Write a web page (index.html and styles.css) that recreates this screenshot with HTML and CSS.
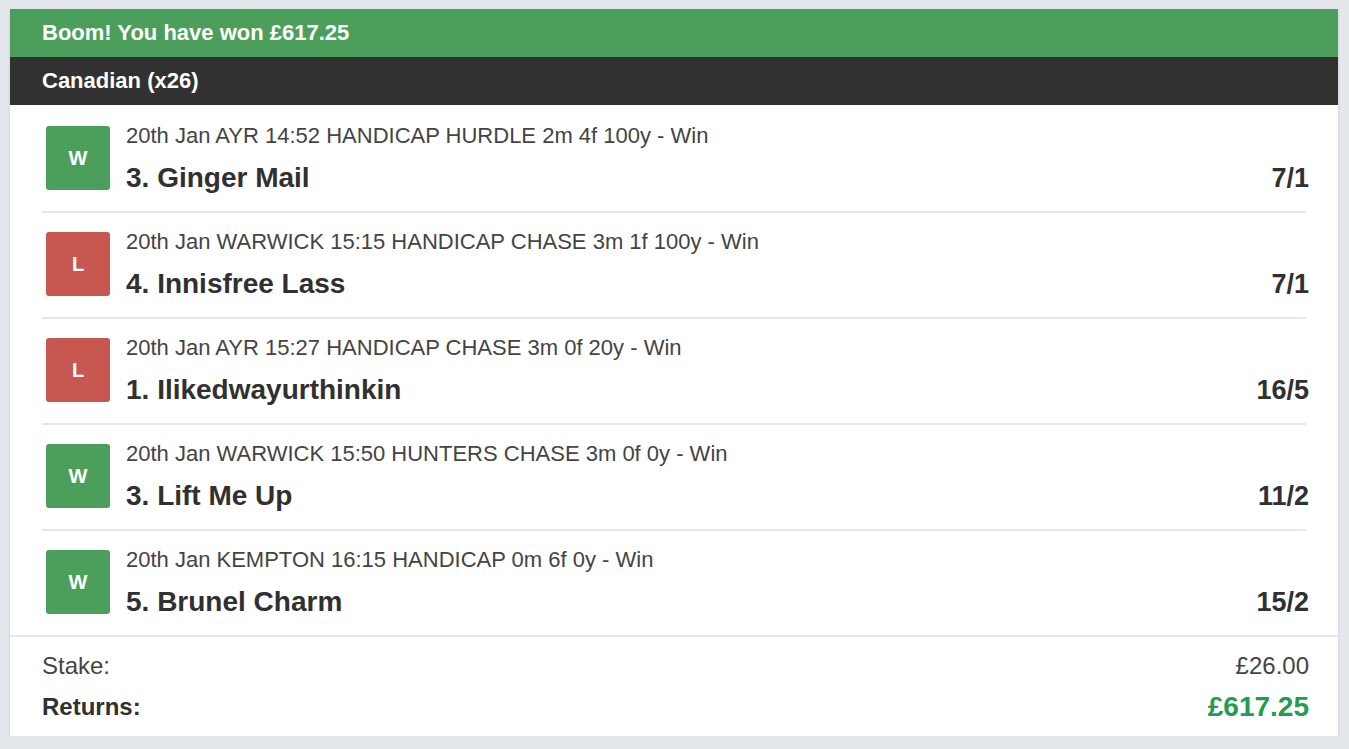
FILE: index.html
```html
<!DOCTYPE html>
<html>
<head>
<meta charset="utf-8">
<link rel="stylesheet" href="styles.css">
</head>
<body>
<div class="card">
  <div class="banner">Boom! You have won £617.25</div>
  <div class="bet-type">Canadian (x26)</div>
  <div class="legs">
    <div class="leg">
      <div class="badge badge-win">W</div>
      <div class="leg-info">
        <div class="race">20th Jan AYR 14:52 HANDICAP HURDLE 2m 4f 100y - Win</div>
        <div class="horse">3. Ginger Mail</div>
      </div>
      <div class="odds">7/1</div>
    </div>
    <div class="leg">
      <div class="badge badge-lose">L</div>
      <div class="leg-info">
        <div class="race">20th Jan WARWICK 15:15 HANDICAP CHASE 3m 1f 100y - Win</div>
        <div class="horse">4. Innisfree Lass</div>
      </div>
      <div class="odds">7/1</div>
    </div>
    <div class="leg">
      <div class="badge badge-lose">L</div>
      <div class="leg-info">
        <div class="race">20th Jan AYR 15:27 HANDICAP CHASE 3m 0f 20y - Win</div>
        <div class="horse">1. Ilikedwayurthinkin</div>
      </div>
      <div class="odds">16/5</div>
    </div>
    <div class="leg">
      <div class="badge badge-win">W</div>
      <div class="leg-info">
        <div class="race">20th Jan WARWICK 15:50 HUNTERS CHASE 3m 0f 0y - Win</div>
        <div class="horse">3. Lift Me Up</div>
      </div>
      <div class="odds">11/2</div>
    </div>
    <div class="leg">
      <div class="badge badge-win">W</div>
      <div class="leg-info">
        <div class="race">20th Jan KEMPTON 16:15 HANDICAP 0m 6f 0y - Win</div>
        <div class="horse">5. Brunel Charm</div>
      </div>
      <div class="odds">15/2</div>
    </div>
  </div>
  <div class="summary">
    <div class="summary-row">
      <span class="label">Stake:</span>
      <span class="value">£26.00</span>
    </div>
    <div class="summary-row summary-returns">
      <span class="label">Returns:</span>
      <span class="value value-green">£617.25</span>
    </div>
  </div>
</div>
</body>
</html>
```

FILE: styles.css
```css
html, body {
  margin: 0;
  padding: 0;
}
body {
  background: #e4e7eb;
  font-family: "Liberation Sans", Arial, Helvetica, sans-serif;
  color: #333;
  padding: 9px 11px 0 10px;
}
.card {
  background: #fff;
  box-shadow: 0 1px 3px rgba(0,0,0,0.12);
}
.banner,
.bet-type {
  height: 48px;
  display: flex;
  align-items: center;
  padding: 0 32px;
  color: #fff;
  font-weight: bold;
  font-size: 22px;
}
.banner {
  background: #4c9f5b;
}
.bet-type {
  background: #313131;
}
.legs {
  padding: 2px 32px 0;
  border-bottom: 2px solid #e4e7eb;
}
.leg {
  display: flex;
  align-items: flex-start;
  height: 104px;
  border-bottom: 2px solid #e4e7eb;
}
.leg:last-child {
  border-bottom: none;
}
.badge {
  width: 64px;
  height: 64px;
  margin: 19px 16px 0 4px;
  border-radius: 3px;
  display: flex;
  align-items: center;
  justify-content: center;
  color: #fff;
  font-weight: bold;
  font-size: 20px;
  flex: none;
}
.badge-win {
  background: #4c9f5b;
}
.badge-lose {
  background: #c85651;
}
.leg-info {
  flex: 1;
  padding-top: 16px;
}
.race {
  font-size: 22px;
  line-height: 26px;
  color: #444;
}
.horse {
  font-size: 28px;
  line-height: 32px;
  font-weight: bold;
  color: #303030;
  margin-top: 13px;
}
.odds {
  margin-top: 55px;
  margin-right: -3px;
  font-size: 27px;
  line-height: 32px;
  font-weight: bold;
  color: #303030;
}
.summary {
  padding: 15px 29px 15px 32px;
}
.summary-row {
  display: flex;
  justify-content: space-between;
  align-items: center;
  font-size: 24px;
  line-height: 28px;
  color: #444;
}
.summary-returns {
  margin-top: 13px;
}
.summary-returns .label {
  font-weight: bold;
  color: #303030;
}
.value-green {
  color: #249b52;
  font-weight: bold;
  font-size: 28px;
}
```
